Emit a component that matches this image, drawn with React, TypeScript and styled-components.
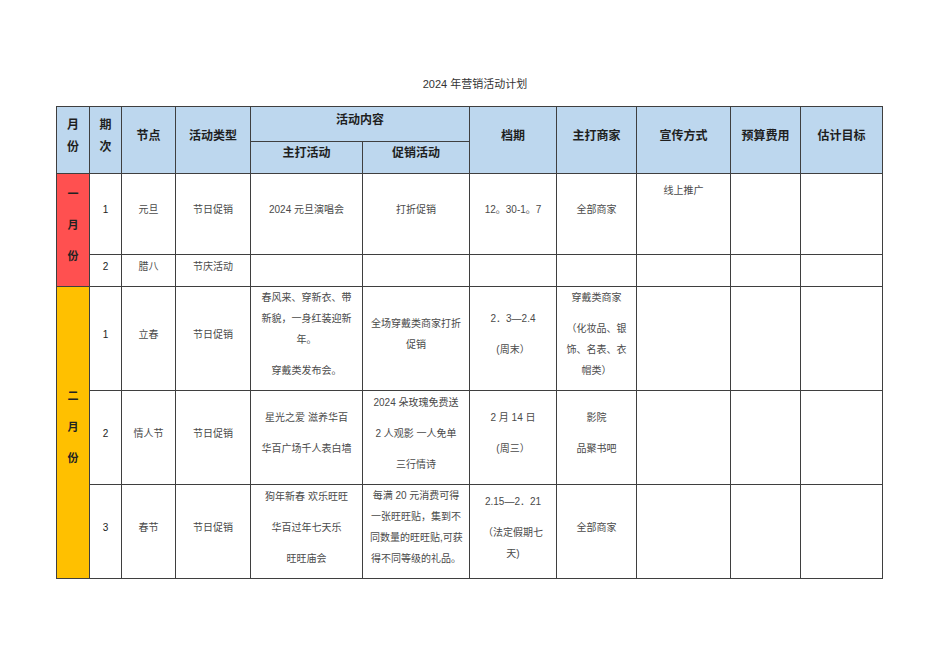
import styled, { createGlobalStyle } from "styled-components";

const GlobalStyle = createGlobalStyle`
    body {
        margin: 0;
        background: #ffffff;
        font-family: "Liberation Sans", "Noto Sans CJK SC", sans-serif;
    }
`;

const Page = styled.div`
    width: 950px;
    padding-top: 77px;
`;

const Title = styled.h1`
    margin: 0 0 15px;
    text-align: center;
    font-size: 11px;
    line-height: 14px;
    font-weight: 400;
    color: #333;
`;

const Table = styled.table`
    margin-left: 56px;
    width: 826px;
    border-collapse: collapse;
    table-layout: fixed;
`;

const Col = styled.col<{ $w: number }>`
    width: ${(p) => p.$w}px;
`;

const Row = styled.tr<{ $h: number }>`
    height: ${(p) => p.$h}px;
`;

const Th = styled.th`
    background: #bdd7ee;
    border: 1px solid #3f3f3f;
    padding: 0 4px 9px;
    font-size: 12px;
    line-height: 22px;
    font-weight: 700;
    color: #1f1f1f;
    text-align: center;
    vertical-align: middle;
`;

const Td = styled.td<{ $top?: boolean }>`
    border: 1px solid #3f3f3f;
    padding: ${(p) => (p.$top ? "6px 7px 9px" : "0 7px 9px")};
    font-size: 10px;
    line-height: 21px;
    color: #4a4a4a;
    text-align: center;
    vertical-align: ${(p) => (p.$top ? "top" : "middle")};
    white-space: nowrap;
`;

const Num = styled(Td)`
    color: #222;
`;

const Month = styled.td<{ $bg: string }>`
    background: ${(p) => p.$bg};
    border: 1px solid #3f3f3f;
    padding: 0 0 10px;
    font-size: 11px;
    line-height: 21px;
    font-weight: 700;
    color: #222;
    text-align: center;
    vertical-align: middle;
`;

const P = styled.p`
    margin: 0;
    & + & {
        margin-top: 10px;
    }
`;

const widths = [33, 32, 54, 75, 112, 107, 87, 80, 94, 70, 82];

const Empty = ({ n }: { n: number }) => (
    <>
        {Array.from({ length: n }).map((_, i) => (
            <Td key={i} />
        ))}
    </>
);

const App = () => {
    return (
        <Page>
            <GlobalStyle />
            <Title>2024 年营销活动计划</Title>
            <Table>
                <colgroup>
                    {widths.map((w, i) => (
                        <Col key={i} $w={w} />
                    ))}
                </colgroup>
                <thead>
                    <Row $h={35}>
                        <Th rowSpan={2}>月<br />份</Th>
                        <Th rowSpan={2}>期<br />次</Th>
                        <Th rowSpan={2}>节点</Th>
                        <Th rowSpan={2}>活动类型</Th>
                        <Th colSpan={2}>活动内容</Th>
                        <Th rowSpan={2}>档期</Th>
                        <Th rowSpan={2}>主打商家</Th>
                        <Th rowSpan={2}>宣传方式</Th>
                        <Th rowSpan={2}>预算费用</Th>
                        <Th rowSpan={2}>估计目标</Th>
                    </Row>
                    <Row $h={32}>
                        <Th>主打活动</Th>
                        <Th>促销活动</Th>
                    </Row>
                </thead>
                <tbody>
                    <Row $h={81}>
                        <Month rowSpan={2} $bg="#ff5050">
                            <P>一</P>
                            <P>月</P>
                            <P>份</P>
                        </Month>
                        <Num>1</Num>
                        <Td>元旦</Td>
                        <Td>节日促销</Td>
                        <Td>2024 元旦演唱会</Td>
                        <Td>打折促销</Td>
                        <Td>12。30-1。7</Td>
                        <Td>全部商家</Td>
                        <Td $top>线上推广</Td>
                        <Empty n={2} />
                    </Row>
                    <Row $h={32}>
                        <Num>2</Num>
                        <Td>腊八</Td>
                        <Td>节庆活动</Td>
                        <Empty n={7} />
                    </Row>
                    <Row $h={104}>
                        <Month rowSpan={3} $bg="#ffc000">
                            <P>二</P>
                            <P>月</P>
                            <P>份</P>
                        </Month>
                        <Num>1</Num>
                        <Td>立春</Td>
                        <Td>节日促销</Td>
                        <Td>
                            <P>春风来、穿新衣、带<br />新貌，一身红装迎新<br />年。</P>
                            <P>穿戴类发布会。</P>
                        </Td>
                        <Td>
                            <P>全场穿戴类商家打折<br />促销</P>
                        </Td>
                        <Td>
                            <P>2．3—2.4</P>
                            <P>(周末）</P>
                        </Td>
                        <Td>
                            <P>穿戴类商家</P>
                            <P>（化妆品、银<br />饰、名表、衣<br />帽类）</P>
                        </Td>
                        <Empty n={3} />
                    </Row>
                    <Row $h={94}>
                        <Num>2</Num>
                        <Td>情人节</Td>
                        <Td>节日促销</Td>
                        <Td>
                            <P>星光之爱 滋养华百</P>
                            <P>华百广场千人表白墙</P>
                        </Td>
                        <Td>
                            <P>2024 朵玫瑰免费送</P>
                            <P>2 人观影 一人免单</P>
                            <P>三行情诗</P>
                        </Td>
                        <Td>
                            <P>2 月 14 日</P>
                            <P>(周三）</P>
                        </Td>
                        <Td>
                            <P>影院</P>
                            <P>品聚书吧</P>
                        </Td>
                        <Empty n={3} />
                    </Row>
                    <Row $h={94}>
                        <Num>3</Num>
                        <Td>春节</Td>
                        <Td>节日促销</Td>
                        <Td>
                            <P>狗年新春 欢乐旺旺</P>
                            <P>华百过年七天乐</P>
                            <P>旺旺庙会</P>
                        </Td>
                        <Td>
                            <P>每满 20 元消费可得<br />一张旺旺贴，集到不<br />同数量的旺旺贴,可获<br />得不同等级的礼品。</P>
                        </Td>
                        <Td>
                            <P>2.15—2．21</P>
                            <P>（法定假期七<br />天)</P>
                        </Td>
                        <Td>
                            <P>全部商家</P>
                        </Td>
                        <Empty n={3} />
                    </Row>
                </tbody>
            </Table>
        </Page>
    );
};

export default App;
